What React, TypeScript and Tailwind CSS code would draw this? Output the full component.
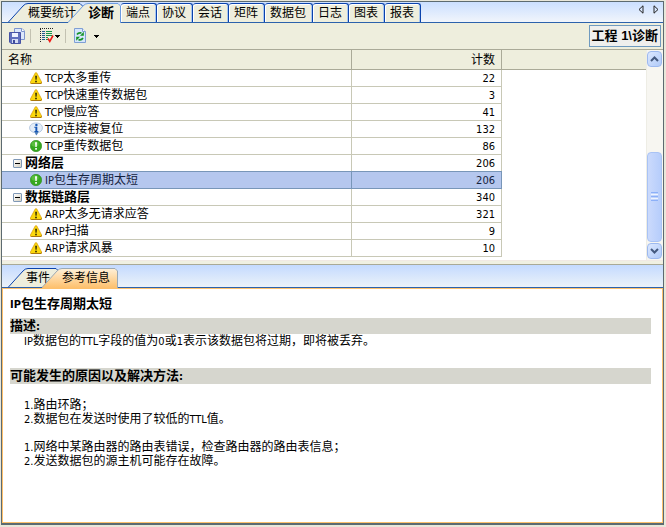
import { useState } from "react";
import type { ReactNode } from "react";
import clsx from "clsx";

type Level = "warning" | "info" | "notice";

interface DiagnosisRow {
  name: string;
  count: number;
  level?: Level;
}

// Rows without a level are protocol layer groups
const rows: DiagnosisRow[] = [
  { name: "TCP太多重传", count: 22, level: "warning" },
  { name: "TCP快速重传数据包", count: 3, level: "warning" },
  { name: "TCP慢应答", count: 41, level: "warning" },
  { name: "TCP连接被复位", count: 132, level: "info" },
  { name: "TCP重传数据包", count: 86, level: "notice" },
  { name: "网络层", count: 206 },
  { name: "IP包生存周期太短", count: 206, level: "notice" },
  { name: "数据链路层", count: 340 },
  { name: "ARP太多无请求应答", count: 321, level: "warning" },
  { name: "ARP扫描", count: 9, level: "warning" },
  { name: "ARP请求风暴", count: 10, level: "warning" },
];

const viewTabs = ["端点", "协议", "会话", "矩阵", "数据包", "日志", "图表", "报表"];

/** Latin letters and digits are set one size smaller than the Chinese text around them. */
function Mixed({ text }: { text: string }) {
  return (
    <>
      {text.split(/([\x20-\x7e]+)/).map((part, i) =>
        i % 2 ? (
          <span key={i} className="whitespace-pre font-['DejaVu_Sans_Condensed','Liberation_Sans',sans-serif] text-[11px] leading-none">
            {part}
          </span>
        ) : (
          part
        )
      )}
    </>
  );
}

function LevelIcon({ level }: { level: Level }) {
  if (level === "warning") {
    return (
      <svg className="h-3 w-3 shrink-0" viewBox="0 0 12 12" aria-hidden="true">
        <path d="M5.2 1 Q6 -0.2 6.8 1 L11.6 10 Q12 11.7 10.6 11.7 H1.4 Q0 11.7 0.4 10 Z" fill="#fbd80c" stroke="#d79a08" strokeWidth="0.7" />
        <path d="M1.2 11.5 H11 L11.4 10.4" fill="none" stroke="#9a6608" strokeWidth="0.8" />
        <path d="M5.2 3.7 H6.9 L6.6 7.8 H5.5 Z" fill="#2b2400" />
        <rect x="5.2" y="8.7" width="1.6" height="1.6" fill="#2b2400" />
      </svg>
    );
  }
  if (level === "info") {
    return (
      <svg className="h-3 w-3 shrink-0 overflow-visible" viewBox="0 0 12 12" aria-hidden="true">
        <path d="M6 0 C9.8 0 12.4 1.9 12.4 4.9 C12.4 7.5 10.4 9.2 7.8 9.6 L6.4 12 L5 9.6 C2 9.4 -0.4 7.6 -0.4 4.9 C-0.4 2 2.4 0 6 0 Z" fill="#e3edf8" stroke="#a6bdd8" strokeWidth="0.8" />
        <path d="M8.4 9 L6.4 12.4 L4.6 9 Z" fill="#4a7cb8" />
        <circle cx="6.4" cy="2" r="1.2" fill="#1556b4" />
        <path d="M4.3 3.8 H7.3 V8 H8.4 V9 H4.4 V8 H5.4 V4.8 H4.3 Z" fill="#1556b4" />
      </svg>
    );
  }
  return (
    <svg className="h-3 w-3 shrink-0" viewBox="0 0 12 12" aria-hidden="true">
      <circle cx="6" cy="6" r="5.7" fill="#36a81f" stroke="#2a8b1a" strokeWidth="0.6" />
      <ellipse cx="5" cy="4" rx="3.6" ry="2.8" fill="#66c84a" opacity="0.7" />
      <path d="M5 2.3 H7 L6.7 7 H5.4 Z" fill="#fff" />
      <rect x="5.2" y="8" width="1.7" height="1.7" fill="#fff" />
    </svg>
  );
}

function SaveIcon() {
  return (
    <svg className="h-4 w-4" viewBox="0 0 16 16" aria-hidden="true">
      <path d="M5.5 0.5 H13 L15.5 3 V11.5 H5.5 Z" fill="#dce8fb" stroke="#7d95ce" />
      <path d="M12.5 0.5 V3.5 H15.5" fill="#fff" stroke="#7d95ce" />
      <path d="M1 4.5 H11.5 V15.5 H2 L0.5 14 V4.5 Z" fill="#6170be" stroke="#4653a5" />
      <rect x="3" y="5" width="6" height="4" fill="#edf2ff" />
      <rect x="3" y="11" width="6" height="4" fill="#d3dbf3" />
      <rect x="4" y="12" width="2" height="3" fill="#3f4b9b" />
    </svg>
  );
}

function ChecklistIcon() {
  return (
    <svg className="h-4 w-4" viewBox="0 0 16 16" aria-hidden="true">
      <path d="M1 0.5 H14" stroke="#222" strokeDasharray="1 1" />
      <path d="M1.5 1 V14" stroke="#222" strokeDasharray="1 1" />
      <path d="M3 3.5 H6 M3 5.5 H6 M3 7.5 H6 M3 9.5 H6 M3 11.5 H6" stroke="#245a91" />
      <path d="M7 3.5 H13 M7 5.5 H13 M7 7.5 H13 M7 9.5 H9 M7 11.5 H9" stroke="#159447" />
      <path d="M9 10.5 L10.8 13.5 L14 7.5" fill="none" stroke="#f01b16" strokeWidth="1.6" />
    </svg>
  );
}

function RefreshIcon() {
  return (
    <svg className="h-4 w-3" viewBox="0 0 12 16" aria-hidden="true">
      <path d="M0.5 0.5 H8.5 L11.5 3.5 V14.5 H0.5 Z" fill="#d5e6fc" stroke="#7f9fd4" />
      <path d="M8.5 0.5 V3.5 H11.5" fill="#fff" stroke="#7f9fd4" />
      <path d="M3 6.5 Q4.5 4.2 7.5 5" fill="none" stroke="#159326" strokeWidth="1.7" />
      <path d="M9.8 3.8 V7.8 H6 Z" fill="#159326" />
      <path d="M9 10 Q7.5 12.4 4.5 11.6" fill="none" stroke="#159326" strokeWidth="1.7" />
      <path d="M2.2 12.8 V8.8 H6 Z" fill="#159326" />
    </svg>
  );
}

function Caret() {
  return (
    <svg className="h-[3px] w-[5px]" viewBox="0 0 5 3" shapeRendering="crispEdges" aria-hidden="true">
      <path d="M0 0 H5 L2.5 3 Z" fill="#000" />
    </svg>
  );
}

interface SlantTabProps {
  width: number;
  tone: "plain" | "active" | "orange";
  className: string;
  children: ReactNode;
}

/** Tab with the sloped left edge used for the first tabs of each bar. */
function SlantTab({ width, tone, className, children }: SlantTabProps) {
  const fill = { plain: "#eeeedd", active: "#eeeedd", orange: "url(#orangeTab)" }[tone];
  const stroke = { plain: "#0b43ac", active: "#6c9be0", orange: "#9aa9b5" }[tone];
  const edge = `M0 19.5 L15 3 Q17 0.5 20 0.5 H${width - 3} L${width - 0.5} 3 V20`;
  return (
    <button
      type="button"
      role="tab"
      aria-selected={tone !== "plain"}
      className={clsx("relative h-5 shrink-0 whitespace-nowrap text-left leading-5", className)}
    >
      <svg className="absolute inset-0 h-full w-full" viewBox={`0 0 ${width} 20`} preserveAspectRatio="none" aria-hidden="true">
        <defs>
          <linearGradient id="orangeTab" x1="0" y1="0" x2="0" y2="1">
            <stop offset="0" stopColor="#fff0d9" />
            <stop offset="1" stopColor="#fdc06c" />
          </linearGradient>
        </defs>
        <path d={`${edge} H0 Z`} fill={fill} />
        <path d={edge} fill="none" stroke={stroke} />
        {tone === "plain" && <path d={`M0 19.5 H${width}`} stroke="#2c62ac" />}
      </svg>
      <span className="relative">{children}</span>
    </button>
  );
}

function ScrollButton({ up }: { up?: boolean }) {
  return (
    <button
      type="button"
      aria-label={up ? "向上滚动" : "向下滚动"}
      className="flex h-4 shrink-0 items-center justify-center rounded-sm border border-[#9db9ef] bg-linear-to-br from-[#dce8ff] to-[#b0caf8]"
    >
      <svg className="h-[6px] w-[9px]" viewBox="0 0 9 6" aria-hidden="true">
        <path d={up ? "M1 5 L4.5 1.5 L8 5" : "M1 1 L4.5 4.5 L8 1"} fill="none" stroke="#44597f" strokeWidth="2" />
      </svg>
    </button>
  );
}

function Section({ title, children }: { title: string; children: ReactNode }) {
  return (
    <section>
      <h3 className="bg-[#d6d6ce] text-[13px] font-bold leading-4">
        <Mixed text={title} />
      </h3>
      <div className="pl-3.5 leading-3.5">{children}</div>
    </section>
  );
}

export default function App() {
  const [selected, setSelected] = useState("IP包生存周期太短");

  return (
    <div className="flex min-h-screen flex-col bg-[#e9e7da] pt-px pr-0.5 pb-0.5 pl-px font-['Liberation_Sans','Noto_Sans_CJK_SC',sans-serif] text-xs text-black">
      <div className="flex flex-1 flex-col border border-b-2 border-[#5c6a70] bg-[#eeeedd]">
        {/* View tabs */}
        <div role="tablist" className="flex h-[21px] items-start bg-linear-to-b from-[#cbdfff] to-[#f3f6fb] pt-px pl-1.5 shadow-[inset_0_-1px_0_#2c62ac]">
          <SlantTab width={75} tone="plain" className="w-[75px] pl-5">
            概要统计
          </SlantTab>
          <SlantTab width={53} tone="active" className="-ml-[15px] w-[53px] pl-5 text-[13px] font-bold">
            诊断
          </SlantTab>
          {viewTabs.map((tab) => (
            <button
              key={tab}
              type="button"
              role="tab"
              aria-selected={false}
              className="h-[19px] shrink-0 rounded-t-[3px] border-t border-r border-[#0b43ac] bg-[#eeeedd] pr-[6px] pl-[5px] leading-[18px] shadow-[inset_-1px_0_0_#a8c6f0,inset_1px_1px_0_#fff]"
            >
              {tab}
            </button>
          ))}
          <div className="ml-auto flex gap-[9px] pt-0.5 pr-1">
            <button type="button" aria-label="向左">
              <svg className="h-[9px] w-[6px]" viewBox="0 0 6 9" aria-hidden="true">
                <path d="M5 0.8 V8.2 L1 4.5 Z" fill="none" stroke="#222" />
              </svg>
            </button>
            <button type="button" aria-label="向右">
              <svg className="h-[9px] w-[6px]" viewBox="0 0 6 9" aria-hidden="true">
                <path d="M1 0.8 V8.2 L5 4.5 Z" fill="none" stroke="#222" />
              </svg>
            </button>
          </div>
        </div>

        {/* Toolbar */}
        <div className="flex h-[26px] items-center pr-0.5 pl-[7px]">
          <button type="button" aria-label="保存">
            <SaveIcon />
          </button>
          <span className="ml-[5px] h-3.5 w-px bg-[#c3c2b2]" />
          <button type="button" aria-label="列设置" className="ml-2 flex items-center">
            <ChecklistIcon />
            <Caret />
          </button>
          <span className="ml-[5px] h-3.5 w-px bg-[#c3c2b2]" />
          <button type="button" aria-label="刷新" className="ml-2 flex items-center gap-2">
            <RefreshIcon />
            <Caret />
          </button>
          <div className="ml-auto h-[22px] border border-[#6f9abf] bg-[#efefed] px-0.5 text-[13px] font-bold leading-5 whitespace-pre">
            工程 1\诊断
          </div>
        </div>

        {/* Diagnosis list */}
        <div className="flex border-t border-[#aaaa98] bg-white">
          <table className="mb-[3px] min-w-0 flex-1 table-fixed border-separate border-spacing-0">
            <colgroup>
              <col className="w-[350px]" />
              <col className="w-[150px]" />
              <col />
            </colgroup>
            <thead>
              <tr className="h-5 bg-[#eeeedd]">
                <th className="border-r border-b border-[#aaaa98] p-0 pl-1.5 text-left font-normal leading-4">名称</th>
                <th className="border-r border-b border-[#aaaa98] p-0 pr-1.5 text-right font-normal leading-4">计数</th>
                <td className="border-b border-[#aaaa98] p-0" />
              </tr>
            </thead>
            <tbody>
              {rows.map((row) => {
                const active = row.name === selected;
                const cell = active
                  ? "border-b border-[#7896b8] bg-[#b5c7ee] text-[#16233f] shadow-[0_-1px_0_#7896b8]"
                  : "border-b border-[#c8c8b6]";
                return (
                  <tr key={row.name} aria-selected={active} onClick={() => setSelected(row.name)}>
                    <td className={clsx("border-r p-0", cell)}>
                      <div className={clsx("flex h-4 items-center gap-[3px]", row.level ? "pl-7" : "pl-[11px]")}>
                        {row.level ? (
                          <LevelIcon level={row.level} />
                        ) : (
                          <button
                            type="button"
                            aria-label={`折叠${row.name}`}
                            className="flex h-[9px] w-[9px] items-center justify-center rounded-[1px] border border-[#7f98b6] bg-linear-to-br from-white to-[#d6d1c2]"
                          >
                            <span className="h-px w-[5px] bg-black" />
                          </button>
                        )}
                        <span className={clsx("whitespace-nowrap leading-4", !row.level && "text-[13px] font-bold")}>
                          <Mixed text={row.name} />
                        </span>
                      </div>
                    </td>
                    <td className={clsx("border-r p-0 pr-1.5 text-right leading-4", cell)}>
                      <Mixed text={String(row.count)} />
                    </td>
                    <td className="p-0" />
                  </tr>
                );
              })}
            </tbody>
          </table>
          <div className="flex w-[17px] shrink-0 flex-col gap-px border-l border-[#eeede5] bg-[#f7f6f1] pt-px pr-px pb-px">
            <ScrollButton up />
            <div className="grow-[84] basis-0" />
            <div className="flex grow-[90] basis-0 flex-col items-center justify-center gap-px rounded-sm border border-[#a9c3f5] bg-linear-to-r from-[#cbdafc] to-[#b6cdfb]">
              <span className="h-px w-[7px] bg-[#8cb0f8]" />
              <span className="h-px w-[7px] bg-[#eef4ff]" />
              <span className="h-px w-[7px] bg-[#8cb0f8]" />
              <span className="h-px w-[7px] bg-[#eef4ff]" />
              <span className="h-px w-[7px] bg-[#8cb0f8]" />
            </div>
            <ScrollButton />
          </div>
        </div>

        {/* Splitter */}
        <div className="h-[5px] border-t border-b border-t-[#f1e9e4] border-b-[#a9a996] bg-[#f0f0e2]" />

        {/* Detail tabs */}
        <div role="tablist" className="flex h-[23px] items-end bg-linear-to-b from-[#c4daff] to-[#edf3f8] pl-1.5 shadow-[inset_0_-1px_0_#2c62ac]">
          <SlantTab width={51} tone="plain" className="w-[51px] pl-[18px]">
            事件
          </SlantTab>
          <SlantTab width={76} tone="orange" className="-ml-[17px] w-[76px] pl-5">
            参考信息
          </SlantTab>
        </div>

        {/* Reference text of the selected event */}
        <article className="flex-1 border border-[#fdc06c] bg-white pt-2 pr-[11px] pl-[7px]">
          <h2 className="mb-[7px] text-[13px] font-bold leading-3.5">
            <Mixed text="IP包生存周期太短" />
          </h2>
          <Section title="描述:">
            <p className="mb-5">
              <Mixed text="IP数据包的TTL字段的值为0或1表示该数据包将过期，即将被丢弃。" />
            </p>
          </Section>
          <Section title="可能发生的原因以及解决方法:">
            <p className="mt-3.5">
              <Mixed text="1.路由环路；" />
            </p>
            <p className="mb-3.5">
              <Mixed text="2.数据包在发送时使用了较低的TTL值。" />
            </p>
            <p>
              <Mixed text="1.网络中某路由器的路由表错误，检查路由器的路由表信息；" />
            </p>
            <p>
              <Mixed text="2.发送数据包的源主机可能存在故障。" />
            </p>
          </Section>
        </article>
      </div>
    </div>
  );
}
